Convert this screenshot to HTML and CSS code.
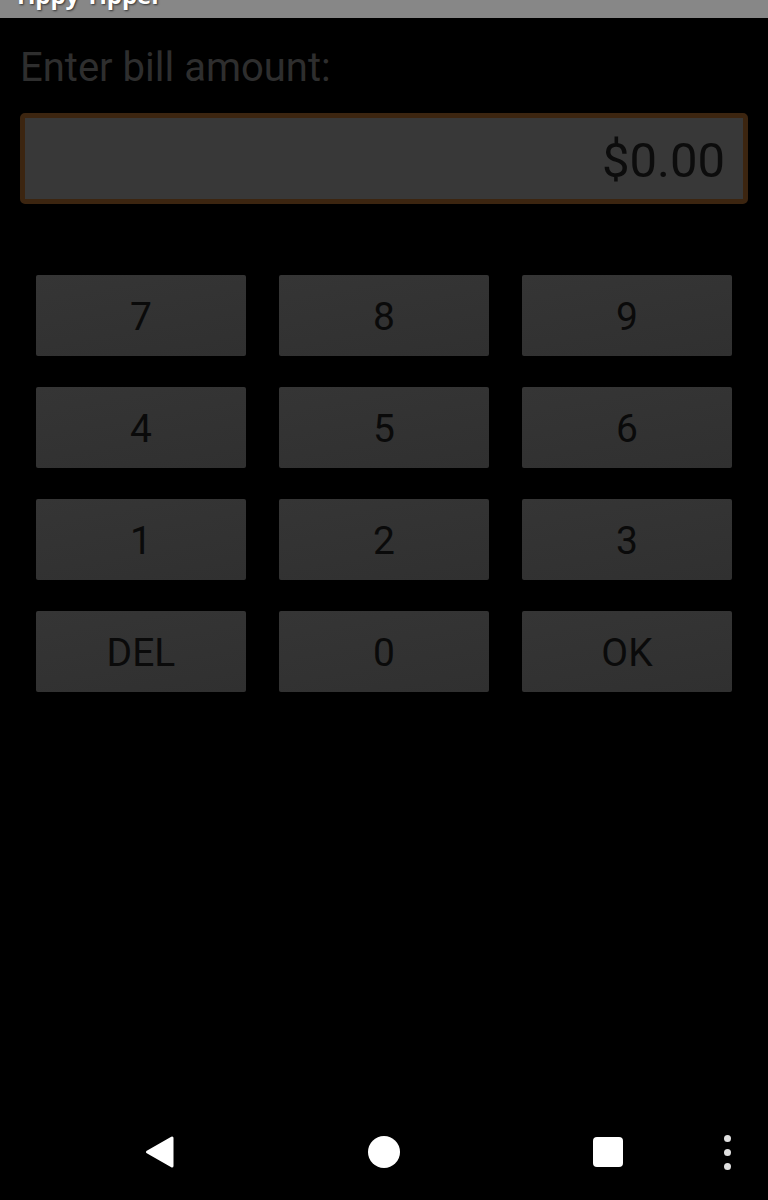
FILE: index.html
```html
<!DOCTYPE html>
<html>
<head>
<meta charset="utf-8">
<link rel="stylesheet" href="styles.css">
</head>
<body>
<div class="screen">
  <header class="titlebar"><h1 class="title">Tippy Tipper</h1></header>
  <main class="content">
    <div class="label">Enter bill amount:</div>
    <div class="amount">$0.00</div>
    <div class="keypad">
      <div class="key">7</div><div class="key">8</div><div class="key">9</div>
      <div class="key">4</div><div class="key">5</div><div class="key">6</div>
      <div class="key">1</div><div class="key">2</div><div class="key">3</div>
      <div class="key">DEL</div><div class="key">0</div><div class="key">OK</div>
    </div>
  </main>
  <nav class="navbar">
    <div class="slot">
      <svg width="32" height="36" viewBox="0 0 32 36"><path d="M3.5 18 L28 4 L28 32 Z" fill="#fff" stroke="#fff" stroke-width="3" stroke-linejoin="round"/></svg>
    </div>
    <div class="slot"><span class="home"></span></div>
    <div class="slot"><span class="recents"></span></div>
    <div class="dots"><span class="dot"></span><span class="dot"></span><span class="dot"></span></div>
  </nav>
</div>
</body>
</html>
```
FILE: styles.css
```css
html, body {
  margin: 0;
  padding: 0;
  background: #000;
}
body {
  font-family: Roboto, "Liberation Sans", sans-serif;
}
.screen {
  width: 768px;
  height: 1200px;
  display: flex;
  flex-direction: column;
  overflow: hidden;
}
.titlebar {
  height: 18px;
  background: #878787;
  overflow: hidden;
  flex: none;
}
.title {
  margin: -17px 0 0 14px;
  font-family: "Open Sans", "Liberation Sans", sans-serif;
  font-weight: 700;
  font-size: 24px;
  line-height: 24px;
  color: #fff;
  text-shadow: 1px 1px 2px #333;
}
.content {
  flex: 1;
}
.label {
  margin-top: 26px;
  padding-left: 20px;
  font-size: 40px;
  line-height: 47px;
  color: #2e2e2e;
}
.amount {
  margin: 22px 20px 0;
  height: 91px;
  box-sizing: border-box;
  border: 5px solid #3c2510;
  border-radius: 5px;
  background: #383838;
  color: #0c0c0c;
  font-size: 49px;
  display: flex;
  align-items: center;
  justify-content: flex-end;
  padding: 3px 18px 0 0;
}
.keypad {
  margin-top: 71px;
  padding: 0 36px;
  display: grid;
  grid-template-columns: repeat(3, 210px);
  grid-auto-rows: 81px;
  column-gap: 33px;
  row-gap: 31px;
}
.key {
  background: linear-gradient(170deg, #353535, #303030);
  border-radius: 2px;
  color: #0a0a0a;
  font-size: 39px;
  display: flex;
  align-items: center;
  justify-content: center;
  padding-top: 2px;
}
.navbar {
  height: 96px;
  flex: none;
  display: flex;
  align-items: center;
  padding-left: 48px;
}
.slot {
  width: 224px;
  display: flex;
  justify-content: center;
  align-items: center;
}
.home {
  width: 32px;
  height: 32px;
  border-radius: 50%;
  background: #fff;
}
.recents {
  width: 30px;
  height: 30px;
  border-radius: 4px;
  background: #fff;
}
.dots {
  width: 14px;
  display: flex;
  flex-direction: column;
  align-items: center;
  gap: 7px;
}
.dot {
  width: 7px;
  height: 7px;
  border-radius: 50%;
  background: #e0e0e0;
}
```
